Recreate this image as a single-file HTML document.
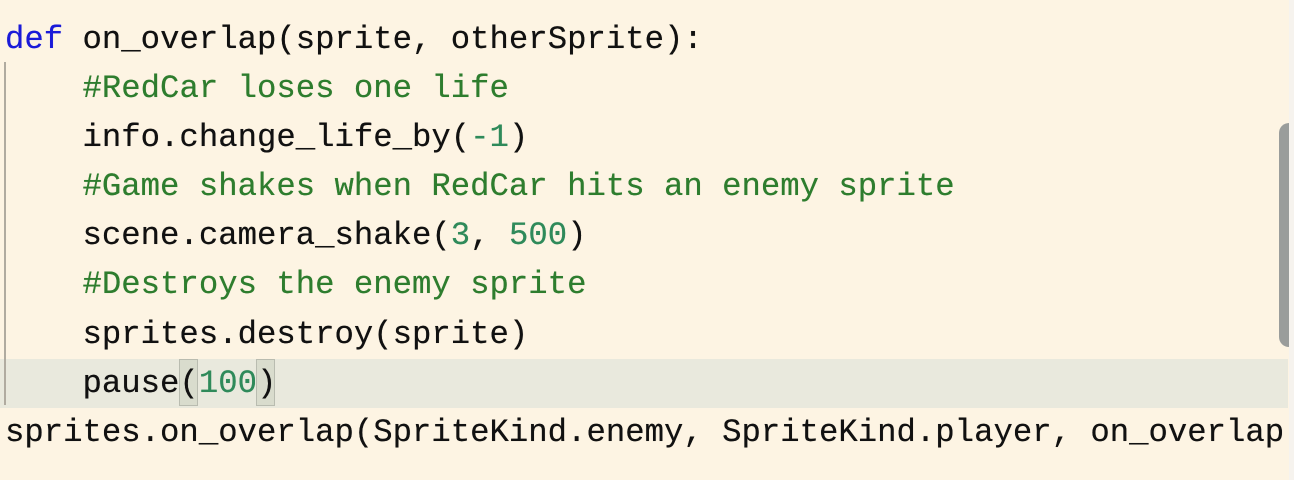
<!DOCTYPE html>
<html><head><style>
html,body{margin:0;padding:0;width:1294px;height:480px;overflow:hidden;background:#fdf4e3;}
.code{position:absolute;left:5px;top:15px;font-family:"Liberation Mono",monospace;font-size:32.3px;line-height:49.1px;color:#111;white-space:pre;text-shadow:0 0 0.4px currentColor;}
.k{color:#1a1ad8}.c{color:#2e7d2e}.n{color:#2f8a5a}
.hl{position:absolute;left:0;top:359px;width:1288px;height:49px;background:#e9e9dd;}
.gut{position:absolute;left:4px;top:62px;width:2px;height:343px;background:#b0aba0;}
.br{position:absolute;top:359px;height:47px;background:#d9dccd;border:1px solid #b9bcb0;box-sizing:border-box;}
.sb{position:absolute;left:1279px;top:123px;width:10px;height:224px;background:#9a9d9b;border-radius:10px 0 0 10px;}
.edge{position:absolute;left:1289px;top:0;width:5px;height:480px;background:#f6f3ee;}
</style></head><body>
<div class="hl"></div>
<div class="br" style="left:179px;width:19px"></div>
<div class="br" style="left:256px;width:19px"></div>
<div class="gut"></div>
<div class="code"><span class="k">def</span> on_overlap(sprite, otherSprite):
    <span class="c">#RedCar loses one life</span>
    info.change_life_by(<span class="n">-1</span>)
    <span class="c">#Game shakes when RedCar hits an enemy sprite</span>
    scene.camera_shake(<span class="n">3</span>, <span class="n">500</span>)
    <span class="c">#Destroys the enemy sprite</span>
    sprites.destroy(sprite)
    pause(<span class="n">100</span>)
sprites.on_overlap(SpriteKind.enemy, SpriteKind.player, on_overlap)</div>
<div class="sb"></div>
<div class="edge"></div>
</body></html>
